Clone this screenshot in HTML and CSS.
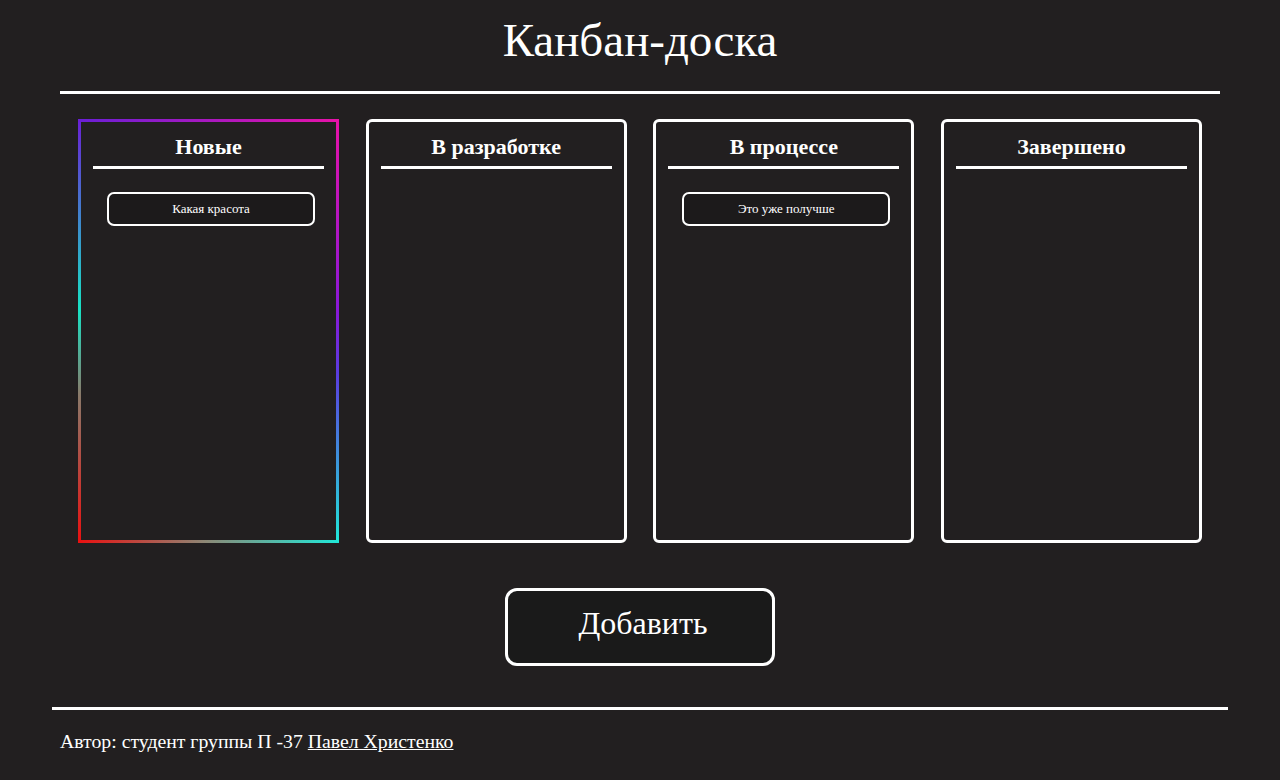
FILE: index.html
```html
<!DOCTYPE html>
<html lang="ru">
<head>
    <meta charset="UTF-8">
    <meta name="viewport" content="width=device-width, initial-scale=1.0">
    <title>Канбан-доска</title>
    <link rel="stylesheet" href="styles.css">
</head>
<body>

    <header class="header">
        <h1>Канбан-доска</h1>
        <div class="line"></div>
    </header>

    <main class="board">
        <div class="column active">
            <h2>Новые</h2>
            <div class="column-line"></div>
            <div class="task">Какая красота</div>
        </div>

        <div class="column">
            <h2>В разработке</h2>
            <div class="column-line"></div>
        </div>

        <div class="column">
            <h2>В процессе</h2>
            <div class="column-line"></div>
            <div class="task">Это уже получше</div>
        </div>

        <div class="column">
            <h2>Завершено</h2>
            <div class="column-line"></div>
        </div>
    </main>

    <div class="add-container">
        <button class="add-button">Добавить</button>
    </div>

    <footer class="footer">
        <div class="footer-line"></div>
        <p>Автор: студент группы П -37 <a href="#">Павел Христенко</a></p>
    </footer>

</body>
</html>
```

FILE: styles.css
```css
body {
    font-family: "Liberation Serif", "Times New Roman", serif;
    background-color: #221f20;
    color: #fff;
    margin: 0;
    padding: 0;
}

.header {
    width: 1160px;
    margin: 0 auto;
    text-align: center;
}

h1 {
    font-size: 47px;
    font-weight: normal;
    line-height: 56px;
    margin: 12px 0 23px;
}

.line {
    height: 3px;
    background-color: #fff;
}

.board {
    width: 1124px;
    margin: 25px auto 0;
    display: flex;
    justify-content: space-between;
}

.column {
    width: 261px;
    height: 424px;
    box-sizing: border-box;
    border: 3px solid #fff;
    border-radius: 6px;
    padding: 12px 12px 0;
    text-align: center;
}

.column.active {
    border: 3px solid transparent;
    border-radius: 0;
    background:
        linear-gradient(#221f20, #221f20) padding-box,
        linear-gradient(to right, #6a1fd6, #e812a8) top left / 100% 3px no-repeat border-box,
        linear-gradient(to right, #ea1010, #8a8a78 50%, #20e8d8) bottom left / 100% 3px no-repeat border-box,
        linear-gradient(to bottom, #6a1fd6, #18e2c4 45%, #8a7a6a 65%, #ea1010) top left / 3px 100% no-repeat border-box,
        linear-gradient(to bottom, #e812a8, #8a18d8 45%, #5a3ce0 60%, #20e8d8) top right / 3px 100% no-repeat border-box;
}

.column h2 {
    font-size: 22px;
    line-height: 25px;
    margin: 0;
}

.column-line {
    height: 3px;
    background-color: #fff;
    margin-top: 7px;
}

.task {
    width: 208px;
    height: 34px;
    box-sizing: border-box;
    margin: 23px 0 0 14px;
    border: 2px solid #fff;
    border-radius: 7px;
    background-color: #1c1a1b;
    font-size: 13px;
    line-height: 30px;
}

.add-container {
    text-align: center;
    margin-top: 45px;
}

.add-button {
    width: 270px;
    height: 78px;
    padding: 0 0 7px 6px;
    background-color: #1a1a1a;
    color: #fff;
    border: 3px solid #fff;
    border-radius: 12px;
    font-family: "Liberation Serif", "Times New Roman", serif;
    font-size: 32px;
    cursor: pointer;
}

.footer {
    width: 1176px;
    margin: 41px auto 0;
}

.footer-line {
    height: 3px;
    background-color: #fff;
}

.footer p {
    font-size: 19.75px;
    margin: 20px 0 0 8px;
}

.footer a {
    color: #fff;
}
```
